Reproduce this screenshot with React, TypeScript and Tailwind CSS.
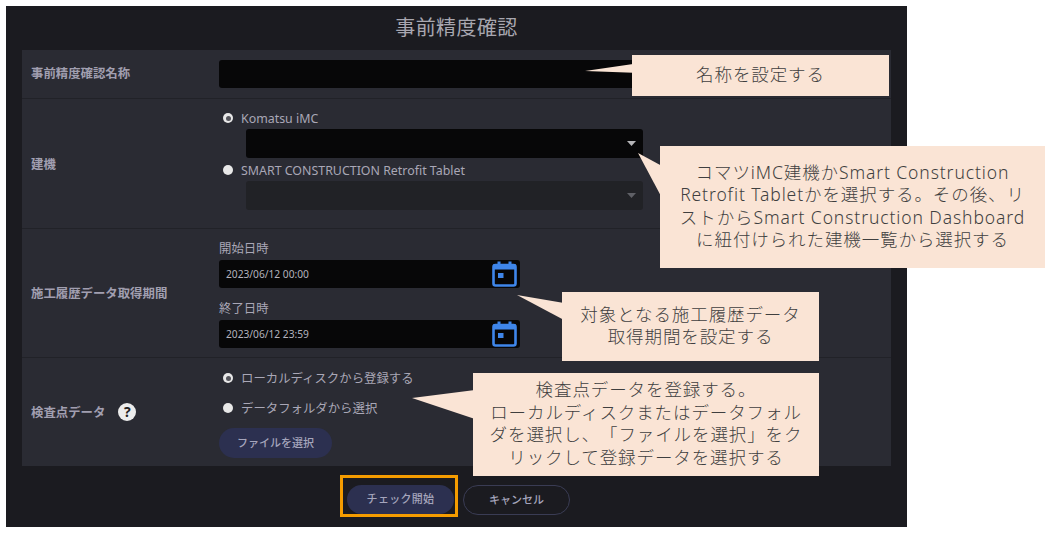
import React from 'react';

const cjk = { fontFamily: '"Noto Sans", "Noto Sans CJK JP", sans-serif' };

function Radio({ checked, label }: { checked?: boolean; label: string }) {
  return (
    <div className="flex items-center h-[20px] text-[12.4px] text-[#a9a7b6]">
      <span className="ml-[4px] w-[10px] h-[10px] rounded-full bg-[#e8e8e8] flex items-center justify-center">
        {checked && <span className="w-[5px] h-[5px] rounded-full bg-[#55555c]" />}
      </span>
      <span className="ml-[8px] pt-[2px]">{label}</span>
    </div>
  );
}

function CalendarIcon() {
  return (
    <svg width="25" height="26" viewBox="0 0 25 26" fill="none" className="mr-[3px]">
      <rect x="1.5" y="4" width="22" height="20.5" rx="2" stroke="#3f86ea" strokeWidth="2.6" />
      <rect x="1.5" y="3" width="22" height="5.5" fill="#3f86ea" />
      <rect x="5.5" y="0.5" width="3" height="4" fill="#3f86ea" />
      <rect x="16.5" y="0.5" width="3" height="4" fill="#3f86ea" />
      <rect x="6" y="12" width="5.5" height="5" fill="#3f86ea" />
    </svg>
  );
}

function DateField({ label, value }: { label: string; value: string }) {
  return (
    <div>
      <div className="h-[22px] text-[12.4px] text-[#a9a7b6] leading-[22px]">{label}</div>
      <div className="w-[301px] h-[28px] rounded-[3px] bg-[#070708] flex items-center justify-between pl-[7px] text-[10.2px] text-[#b4b3bd]">
        <span className="pt-[2px]">{value}</span>
        <CalendarIcon />
      </div>
    </div>
  );
}

function SelectField({ disabled }: { disabled?: boolean }) {
  return (
    <div className={`ml-[27px] w-[397px] h-[29px] rounded-[3px] flex items-center justify-end pr-[7px] ${disabled ? 'bg-[#212226]' : 'bg-[#070708]'}`}>
      <svg width="9" height="5" viewBox="0 0 9 5">
        <polygon points="0,0 9,0 4.5,5" fill={disabled ? '#5f6066' : '#b5b5b8'} />
      </svg>
    </div>
  );
}

function Callout({ className, tail, children }: { className: string; tail: string; children: React.ReactNode }) {
  return (
    <>
      <svg className="absolute left-0 top-0 pointer-events-none" width="1055" height="534">
        <polygon points={tail} fill="#fae4d5" />
      </svg>
      <div className={`absolute bg-[#fae4d5] text-[#3f3f3f] text-[17.5px] leading-[22.5px] font-light tracking-[0.9px] [text-spacing-trim:space-all] text-center flex items-center justify-center whitespace-nowrap pb-[3px] ${className}`}>
        <div>{children}</div>
      </div>
    </>
  );
}

export default function App() {
  return (
    <div className="relative w-[1055px] h-[534px] bg-white overflow-hidden" style={cjk}>
      <div className="relative left-[6px] top-[6px] w-[901px] h-[521px] bg-[#1b1b20] flex flex-col">
        <h1 className="h-[44px] shrink-0 flex items-center justify-center text-[20px] text-[#a8a7b0] tracking-[0.4px]">
          事前精度確認
        </h1>

        <div className="mx-[16px] w-[869px] bg-[#2a2b33] text-[12.4px] font-bold text-[#a19fb0]">
          <div className="h-[49px] border-b border-[#212228] flex items-center">
            <div className="w-[197px] pl-[9px] shrink-0">事前精度確認名称</div>
            <div className="w-[420px] h-[28px] rounded-[3px] bg-[#070708]" />
          </div>

          <div className="h-[130px] border-b border-[#212228] flex items-center">
            <div className="w-[197px] pl-[9px] pt-[3px] shrink-0">建機</div>
            <div className="font-normal pt-[9px] self-start flex flex-col gap-[1px]">
              <Radio checked label="Komatsu iMC" />
              <SelectField />
              <div className="h-0" />
              <Radio label="SMART CONSTRUCTION Retrofit Tablet" />
              <SelectField disabled />
            </div>
          </div>

          <div className="h-[129px] border-b border-[#212228] flex items-center">
            <div className="w-[197px] pl-[9px] pt-[2px] shrink-0">施工履歴データ取得期間</div>
            <div className="font-normal self-start pt-[9px] flex flex-col gap-[10px]">
              <DateField label="開始日時" value="2023/06/12 00:00" />
              <DateField label="終了日時" value="2023/06/12 23:59" />
            </div>
          </div>

          <div className="h-[108px] flex items-center">
            <div className="w-[197px] pl-[9px] shrink-0 flex items-center">
              <span className="pt-[2px]">検査点データ</span>
              <span className="ml-[13px] w-[18px] h-[18px] rounded-full bg-[#ececec] text-[#222] text-[14px] font-bold flex items-center justify-center">?</span>
            </div>
            <div className="font-normal self-start pt-[10px] flex flex-col">
              <Radio checked label="ローカルディスクから登録する" />
              <div className="h-[10px]" />
              <Radio label="データフォルダから選択" />
              <button className="mt-[10px] w-[113px] h-[30px] rounded-full bg-[#2c3050] text-[11px] font-medium text-[#a5a5bc]">
                ファイルを選択
              </button>
            </div>
          </div>
        </div>

        <div className="flex-1 flex items-start pt-[9px] pl-[334px]">
          <div className="border-[3px] border-[#f59c00] w-[118px] h-[42px] pl-[4px]">
            <button className="w-[107px] h-[29px] mt-[7px] rounded-full bg-[#2c3050] text-[11px] font-medium text-[#a5a5bc] tracking-[0.3px] block">
              チェック開始
            </button>
          </div>
          <button className="ml-[5px] mt-[10px] w-[107px] h-[30px] rounded-full border border-[#3a3c54] text-[11px] font-medium text-[#a5a5bc]">
            キャンセル
          </button>
        </div>
      </div>

      <Callout className="left-[632px] top-[55px] w-[257px] h-[41px]" tail="585,71 640,63 640,73">
        名称を設定する
      </Callout>
      <Callout className="left-[660px] top-[146px] w-[385px] h-[122px]" tail="638,153 662,166 662,198">
        コマツiMC建機かSmart Construction<br />
        Retrofit Tabletかを選択する。その後、リ<br />
        ストからSmart Construction Dashboard<br />
        に紐付けられた建機一覧から選択する
      </Callout>
      <Callout className="left-[562px] top-[292px] w-[257px] h-[69px]" tail="517,295 564,303 564,320">
        対象となる施工履歴データ<br />
        取得期間を設定する
      </Callout>
      <Callout className="left-[473px] top-[373px] w-[346px] h-[103px]" tail="412,398 475,390 475,419">
        検査点データを登録する。<br />
        ローカルディスクまたはデータフォル<br />
        ダを選択し、「ファイルを選択」をク<br />
        リックして登録データを選択する
      </Callout>
    </div>
  );
}
